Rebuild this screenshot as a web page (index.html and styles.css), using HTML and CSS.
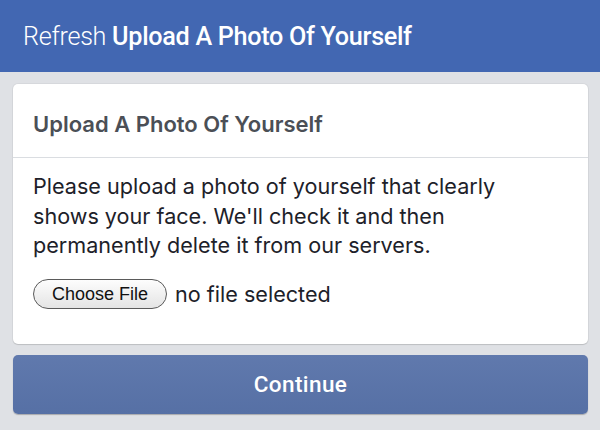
FILE: index.html
```html
<!DOCTYPE html>
<html>
<head>
<meta charset="utf-8">
<link rel="stylesheet" href="styles.css">
</head>
<body>
<header class="topbar">
  <h1 class="topbar-title"><span class="light">Refresh</span> <span class="strong">Upload A Photo Of Yourself</span></h1>
</header>
<main class="content">
  <section class="card">
    <div class="card-head">Upload A Photo Of Yourself</div>
    <div class="card-body">
      <p class="desc">Please upload a photo of yourself that clearly shows your face. We'll check it and then permanently delete it from our servers.</p>
      <div class="file-row">
        <span class="file-btn">Choose File</span>
        <span class="file-text">no file selected</span>
      </div>
    </div>
  </section>
  <button class="continue">Continue</button>
</main>
</body>
</html>
```

FILE: styles.css
```css
html, body {
  margin: 0;
  padding: 0;
  background: #dfe1e5;
  width: 600px;
  height: 430px;
  overflow: hidden;
}
.topbar {
  background: #4267b2;
  height: 72px;
  display: flex;
  align-items: center;
  padding: 0 23px;
  box-sizing: border-box;
}
.topbar-title {
  margin: 0;
  font-family: Roboto, "Liberation Sans", sans-serif;
  font-size: 25.2px;
  letter-spacing: -0.3px;
  color: #fff;
  font-weight: 400;
}
.light { font-weight: 300; }
.strong { font-weight: 500; }
.content {
  padding: 12px 12px 0 13px;
  display: flex;
  flex-direction: column;
  gap: 11px;
}
.card {
  background: #fff;
  border-radius: 5px;
  box-shadow: 0 1px 1px rgba(0,0,0,0.12), 0 0 0 1px rgba(0,0,0,0.04);
}
.card-head {
  height: 74px;
  display: flex;
  align-items: center;
  padding: 7px 20px 0;
  font-family: Inter, "Liberation Sans", sans-serif;
  font-weight: 600;
  font-size: 22px;
  color: #4b4f56;
  border-bottom: 1px solid #dadde1;
  box-sizing: border-box;
}
.card-body {
  padding: 14px 20px 35px;
  font-family: Inter, "Liberation Sans", sans-serif;
}
.desc {
  margin: 0;
  font-size: 21.6px;
  line-height: 29.5px;
  color: #1d2129;
  max-width: 505px;
}
.file-row {
  display: flex;
  align-items: center;
  gap: 8px;
  margin-top: 18px;
}
.file-btn {
  font-family: "Liberation Sans", Arial, sans-serif;
  font-size: 18px;
  color: #111;
  height: 28px;
  line-height: 28px;
  padding: 0 18px 0 18px;
  border: 1px solid #5a5a5a;
  border-radius: 15px;
  background: linear-gradient(#fdfdfd, #e4e4e4);
}
.file-text {
  font-size: 21.6px;
  color: #1d2129;
}
.continue {
  height: 59px;
  border: none;
  border-radius: 5px;
  background: linear-gradient(#6079ad, #5670a5);
  box-shadow: 0 1px 1px rgba(0,0,0,0.25);
  color: #fff;
  font-family: Roboto, "Liberation Sans", sans-serif;
  font-weight: 500;
  font-size: 22.5px;
  letter-spacing: 0.4px;
  padding: 0;
}
```
